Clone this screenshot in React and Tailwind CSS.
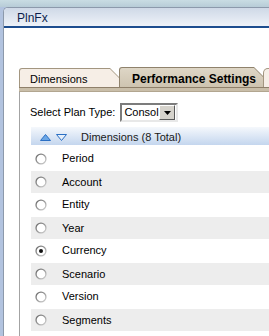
import { useState } from 'react';

const dims = ['Period', 'Account', 'Entity', 'Year', 'Currency', 'Scenario', 'Version', 'Segments'];

const chamfer = '[clip-path:polygon(0_0,calc(100%_-_9px)_0,100%_9px,100%_100%,0_100%)]';

function Radio({ checked }) {
  return (
    <svg width="12" height="12" viewBox="0 0 12 12" className="shrink-0">
      <defs>
        <linearGradient id="rb" x1="0" y1="0" x2="1" y2="1">
          <stop offset="0" stopColor="#5e5e5e" />
          <stop offset="0.5" stopColor="#9a9a9a" />
          <stop offset="1" stopColor="#dcdcdc" />
        </linearGradient>
      </defs>
      <circle cx="6" cy="6" r="5.6" fill="url(#rb)" />
      <circle cx="6" cy="6" r="4.3" fill="#ffffff" />
      {checked && <circle cx="6" cy="6" r="2" fill="#111111" />}
    </svg>
  );
}

function SortArrows() {
  return (
    <div className="flex items-center gap-[5px]">
      <svg width="11" height="7" viewBox="0 0 11 7">
        <polygon points="5.5,0.5 10.5,6.5 0.5,6.5" fill="#6aa6e6" stroke="#2a6fc4" strokeWidth="1" />
      </svg>
      <svg width="11" height="7" viewBox="0 0 11 7">
        <polygon points="0.5,0.5 10.5,0.5 5.5,6.5" fill="#e6effa" stroke="#2a6fc4" strokeWidth="1" />
      </svg>
    </div>
  );
}

export default function App() {
  const [selected, setSelected] = useState('Currency');

  return (
    <div className="w-[269px] h-[336px] overflow-hidden bg-[#b2c3df] font-['Liberation_Sans',Arial,sans-serif] text-[11px] text-black">
      <div className="h-[7px] bg-gradient-to-b from-[#c9dce3] to-[#b7ccd7]" />

      <div className="ml-[3px] h-[329px] bg-white rounded-tl-[5px] border-l border-t border-[#8c99ab] flex flex-col">
        {/* TITULO */}
        <div className="h-[20px] shrink-0 flex items-center pl-[13px] pt-[2px] bg-gradient-to-b from-[#cfd9e7] to-[#eef2f8] border-b-2 border-[#1d4d8e] rounded-tl-[4px]">
          <span className="text-[12px] text-[#0c1f4c]">PlnFx</span>
        </div>

        <div className="pl-[15px] pt-[39px] flex-1 flex flex-col">
          {/* TABS */}
          <div className="flex items-end h-[20px]">
            <div className={`w-[100px] h-[19px] bg-[#a39680] rounded-tl-[3px] pt-px pl-px ${chamfer}`}>
              <div className={`h-full bg-[#f6eee6] rounded-tl-[2px] flex items-center pl-[10px] pt-[3px] ${chamfer}`}>
                Dimensions
              </div>
            </div>
            <div className={`w-[144px] h-[20px] bg-[#8f826c] rounded-tl-[3px] pt-px pl-px ${chamfer}`}>
              <div className={`h-full bg-gradient-to-b from-[#ded6c6] to-[#cec4b0] rounded-tl-[2px] flex items-center pl-[12px] pt-[3px] text-[12px] font-bold ${chamfer}`}>
                Performance Settings
              </div>
            </div>
            <div className="flex-1 h-[19px] bg-[#a39680] rounded-tl-[5px] pt-px pl-px">
              <div className="h-full bg-[#f6eee6] rounded-tl-[4px]" />
            </div>
          </div>
          <div className="h-[5px] bg-[#c9bea9] border-t border-[#8f806a] border-b border-b-[#b2a690]" />

          {/* CONTENIDO */}
          <div className="flex-1 border-l border-[#a3a3a3] flex flex-col">
            <div className="mt-[11px] h-[19px] flex items-center pl-[10px]">
              <span>Select Plan Type:</span>
              <div className="ml-[5px] w-[58px] h-[19px] flex items-center bg-white border-2 border-t-[#7c7c7c] border-l-[#7c7c7c] border-b-[#e8e8e8] border-r-[#e8e8e8]">
                <span className="pl-[2px] flex-1">Consol</span>
                <div className="w-[16px] h-[15px] mr-px bg-[#d6d3cc] border border-t-white border-l-white border-b-[#5a5a5a] border-r-[#5a5a5a] flex items-center justify-center">
                  <svg width="7" height="4" viewBox="0 0 7 4">
                    <polygon points="0,0 7,0 3.5,4" fill="#000" />
                  </svg>
                </div>
              </div>
            </div>

            <div className="ml-[11px] mt-[5px] h-[18px] flex items-center pl-[9px] pt-[2px] bg-gradient-to-b from-[#f5f8fc] to-[#c4d6ee]">
              <SortArrows />
              <span className="ml-[14px] text-[#1a1a1a]">Dimensions (8 Total)</span>
            </div>

            <div className="ml-[11px] mt-[2px] flex flex-col">
              {dims.map((d, i) => (
                <div
                  key={d}
                  onClick={() => setSelected(d)}
                  className={`h-[23px] flex items-center pl-[4px] ${i % 2 === 1 ? 'bg-[#ededed] border-t border-white' : 'bg-white'}`}
                >
                  <Radio checked={selected === d} />
                  <span className="ml-[15px]">{d}</span>
                </div>
              ))}
            </div>
          </div>
        </div>
      </div>
    </div>
  );
}
